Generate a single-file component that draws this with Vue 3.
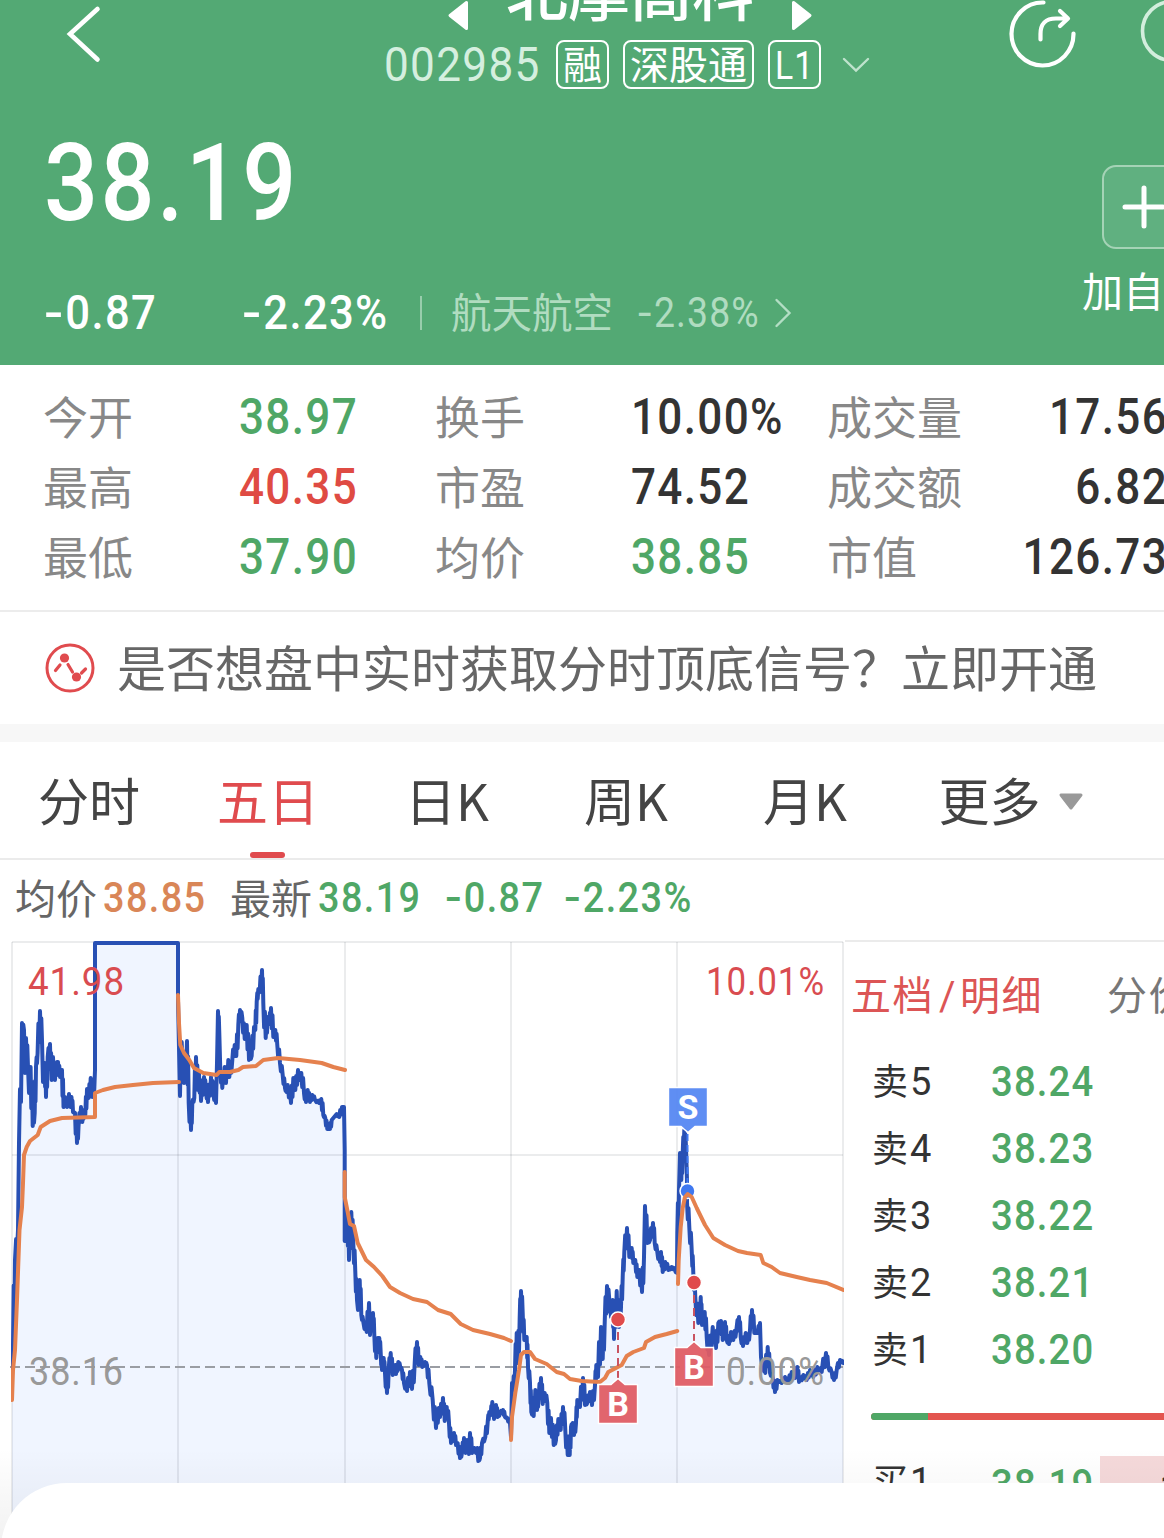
<script setup>
import { ref } from 'vue'

const quotes = [
  { label: '今开', value: '38.97', tone: 'down' },
  { label: '换手', value: '10.00%', tone: '' },
  { label: '成交量', value: '17.56', tone: '' },
  { label: '最高', value: '40.35', tone: 'up' },
  { label: '市盈', value: '74.52', tone: '' },
  { label: '成交额', value: '6.82', tone: '' },
  { label: '最低', value: '37.90', tone: 'down' },
  { label: '均价', value: '38.85', tone: 'down' },
  { label: '市值', value: '126.73', tone: '' },
]

const tabs = ['分时', '五日', '日K', '周K', '月K', '更多']
const activeTab = ref('五日')

const asks = [
  { level: '5', price: '38.24' },
  { level: '4', price: '38.23' },
  { level: '3', price: '38.22' },
  { level: '2', price: '38.21' },
  { level: '1', price: '38.20' },
]

// 五日分时价格，每天一段
const prices = [
  '12,1376 13,1345 15,1260 18,1230 19,1143 20,1089 21,1102 22,1023 24,1030 25,1073 26,1038 28,1067 29,1093 30.6,1067 32.7,1126 34.7,1113 36,1067 37.6,1053 40,1011 42,1040 43,1082 44.6,1063 46,1097 47.7,1057 50,1044 51.7,1080 53,1057 55,1080 57,1062 58,1062 60,1077 62,1070 63.5,1107 65,1097 67,1107 69,1094 70.5,1107 71.5,1097 73,1112 75,1113 77,1143 78.5,1127 81,1107 82.3,1122 84,1110 85.3,1115 87,1089 88.7,1098 90.7,1078 92.3,1097 94.3,1089 95,1070 95,943 178,943 178,1000',
  '180,1096 181.7,1042 184,1083 187,1041 188.7,1103 191,1130 192.3,1103 194.3,1098 196,1057 198,1090 199,1073 201,1101 204,1077 206,1090 208,1102 211,1077 213.3,1093 216,1103 217,1063 218,1011 219.3,1033 220.3,1070 222.3,1088 224.7,1067 226,1083 228.3,1060 229.3,1077 232.3,1060 234.7,1045 236.3,1056 238.3,1025 240,1010 242.3,1018 244.7,1039 246.7,1025 249,1060 251.7,1056 254,1027 255.3,1030 256.7,1002 258.3,989 259.7,992 262,970 263.3,1003 265.7,1038 267.7,1017 269.3,1024 271,1008 273.3,1037 275.3,1030 277.3,1045 280,1063 282.7,1075 285,1088 286.7,1092 287.7,1085 291,1103 293.3,1078 295.3,1090 298,1070 299.7,1080 301.3,1073 304,1093 306,1102 307.7,1090 310,1102 312.3,1095 315,1100 319,1103 321.3,1099 323.3,1115 325.3,1118 327.3,1129 330,1129 331.7,1120 336.7,1114 339.3,1117 342,1107 344,1107',
  '344.7,1150 344.7,1241 347.3,1213 349,1260 351.3,1212 353.3,1243 355.3,1272 357,1300 358,1310 359.7,1280 361.3,1315 363.3,1322 366.7,1332 369,1303 370,1335 373,1313 374.3,1335 376.3,1358 377.7,1338 379.3,1338 380.7,1353 382,1370 383.7,1358 385,1373 387,1393 388.7,1370 390.7,1353 392.7,1375 395.3,1365 396,1374 398.3,1362 400.3,1367 402,1370 404,1383 407,1391 410,1372 412,1389 414.7,1363 417,1342 418.7,1365 420.3,1357 422.3,1367 425,1362 427,1365 429.3,1383 432.7,1400 436,1428 438.7,1408 440,1417 443,1398 444.7,1421 446.7,1407 449,1423 451,1443 454,1433 456,1445 457.7,1443 460,1458 462,1453 464,1438 465.7,1453 467,1440 469,1454 470,1433 472,1453 474.3,1448 476,1453 477.3,1448 478.3,1461 480,1458 482,1443 485.3,1437 487.7,1422 489.3,1412 490.7,1415 492.3,1402 494,1419 496,1405 497.7,1417 500,1413 503,1410 505,1417 507.3,1418 510,1423',
  '511,1437 512,1383 513,1390 515,1370 516.7,1333 517.7,1363 519.7,1317 521,1291 522.7,1313 524.3,1340 526.7,1337 528,1367 530,1383 531.3,1412 533.7,1416 535.3,1390 537,1410 538.7,1397 541,1378 542.7,1404 544.7,1393 547.3,1403 549.3,1433 551,1418 553.7,1445 556,1440 558.3,1419 560.7,1430 563,1407 565.3,1430 567.7,1455 569.7,1455 571,1427 572.7,1423 574,1435 576,1423 577.3,1400 580,1407 583,1378 585,1405 587.3,1403 590,1392 592,1405 595,1385 596.3,1365 598,1377 601,1327 602.7,1359 604.7,1323 607,1286 609.3,1300 611,1317 612.7,1300 614,1339 616.7,1291 619,1327 621,1307 622.7,1277 624.3,1252 627,1228 629.3,1257 631.7,1248 633.3,1263 635.3,1260 637.3,1277 639.3,1270 642,1292 644,1257 645,1206 647.3,1243 650,1240 653,1223 654.7,1243 657.3,1252 660,1262 661,1252 662.7,1272 665.3,1262 668.3,1270 671.7,1267 675,1270 677,1273',
  '677.3,1233 679,1190 680,1153 681.3,1180 682.7,1153 684.3,1130 686,1147 687,1180 687,1202 689.3,1227 691.7,1250 693.3,1273 695.3,1297 698.3,1323 700.7,1297 702,1325 704.7,1312 706.7,1337 709,1355 712.7,1327 716,1348 718.3,1323 721,1321 722.7,1340 725,1322 726.7,1340 729,1344 731,1332 733.3,1340 736.7,1327 739,1317 740.7,1337 743,1346 745.7,1333 747.3,1343 750,1330 752,1310 754.3,1333 757.7,1333 760,1323 761,1357 763.3,1367 765.3,1373 767.7,1347 770,1373 772.7,1377 775,1392 777.3,1380 781.7,1383 785,1377 788.3,1383 791.7,1372 795,1378 797.3,1367 799,1382 803.3,1375 806.7,1380 810,1370 813.3,1377 817.3,1367 821.7,1372 826,1353 828.3,1367 831.7,1372 834,1380 836.7,1370 840,1360 843.3,1363',
]

// 相邻两点之间补一次回摆，还原逐笔波动
const wiggle = (segment) => {
  const pts = segment.split(' ').map((p) => p.split(',').map(Number))
  const out = [pts[0]]
  for (let i = 1; i < pts.length; i++) {
    const [x1, y1] = pts[i - 1]
    const [x2, y2] = pts[i]
    const dx = x2 - x1
    const dy = y2 - y1
    if (dx > 1.1 && dx < 5) {
      out.push([x1 + dx * 0.35, y1 + dy * 0.7], [x1 + dx * 0.65, y1 + dy * 0.25])
    }
    out.push([x2, y2])
  }
  return out.map(([x, y]) => `${x.toFixed(1)},${y.toFixed(1)}`).join(' ')
}

const priceLine = prices.map(wiggle).join(' ')

// 均价线
const avgLines = [
  '12,1400 13,1370 15,1350 17,1300 19.5,1230 22,1207 23,1183 24,1155 26.7,1147 30,1141 37.7,1135 40.7,1127 50,1121 62,1118 95,1117 95,1093 103,1090 115,1087 133,1085 153,1083 179,1082',
  '178,995 179,1023 180.3,1045 184,1053 189.3,1060 194,1068 203.3,1073 216.7,1075 219.3,1072 230,1072 238.3,1070 243,1067 256,1066 263.3,1060 278,1058 300,1060 321.7,1063 333.3,1067 345,1070',
  '344.7,1172 344.7,1197 347.3,1210 350,1224 354,1226 357.7,1243 366,1260 374,1267 382.3,1276 390,1287 400,1293 413,1299 427,1302 438,1310 450.7,1314 460.7,1324 473,1330 490,1334 504,1338 511,1341',
  '511,1440 512,1417 515.3,1393 519,1370 521,1355 524,1352 530,1352 535,1359 546.7,1364 556.7,1372 564,1374 570,1379 581.7,1381 600,1382 605,1378 608.3,1372 621.7,1365 626.7,1356 633.3,1352 644,1348 646,1342 655,1337 666.7,1334 677.3,1331',
  '678,1284 678.7,1260 680.7,1227 682.7,1208 685,1197 687.7,1194 691.7,1197 696.7,1208 705,1225 713.3,1238 725,1245 738,1251 747,1253 760.7,1255 763.3,1263 771.7,1267 780,1273 796.7,1277 810,1280 826.7,1283 843.3,1290',
]

const dayLines = [12, 178, 345, 511, 677, 843]
</script>

<template>
  <div class="page">
    <header class="header">
      <div class="nav">
        <svg class="back" width="40" height="70" viewBox="64 0 40 70">
          <path d="M97.5 9 L70 34 L97.5 59.5" fill="none" stroke="#fff" stroke-width="4.6" stroke-linecap="round" />
        </svg>
        <div class="stock">
          <div class="stock-name">
            <svg width="22" height="32" viewBox="0 0 22 32">
              <path d="M19.5 2.5 V28.5 L3 15.5 Z" fill="#fff" stroke="#fff" stroke-width="3" stroke-linejoin="round" />
            </svg>
            <span class="name">北摩高科</span>
            <svg width="22" height="32" viewBox="0 0 22 32">
              <path d="M2.5 2.5 V28.5 L19 15.5 Z" fill="#fff" stroke="#fff" stroke-width="3" stroke-linejoin="round" />
            </svg>
          </div>
          <div class="stock-code">
            <span class="code num">002985</span>
            <span class="tag">融</span>
            <span class="tag">深股通</span>
            <span class="tag tag-level"><span class="num">L1</span></span>
            <svg width="30" height="20" viewBox="0 0 30 20">
              <path d="M3 4 L15 15.5 L27 4" fill="none" stroke="#bfe3cd" stroke-width="2.4" stroke-linecap="round" />
            </svg>
          </div>
        </div>
        <svg class="actions" width="160" height="70" viewBox="1004 0 160 70">
          <g fill="none" stroke="#fff" stroke-width="4.2" stroke-linecap="round" stroke-linejoin="round">
            <path d="M1043.5 2.5 A31 31.5 0 1 0 1073.5 33.5" />
            <path d="M1040.5 39.5 V34 Q1040.5 18.5 1056 18.5 H1067 M1060 11 L1068 18.5 L1060 26" />
            <circle cx="1172" cy="31" r="29.5" stroke="#d3eedd" stroke-width="3.6" />
          </g>
        </svg>
      </div>

      <div class="summary">
        <div>
          <div class="price num">38.19</div>
          <div class="changes">
            <span class="chg num"><i>-</i>0.87</span>
            <span class="pct num"><i>-</i>2.23%</span>
            <div class="bar"></div>
            <span class="sector">航天航空</span>
            <span class="sector-pct num"><i>-</i>2.38%</span>
            <svg width="20" height="32" viewBox="0 0 20 32">
              <path d="M3.5 3 L16.5 16 L3.5 29" fill="none" stroke="#b3dec4" stroke-width="2.4" stroke-linecap="round" />
            </svg>
          </div>
        </div>
        <div class="add">
          <div class="add-box">
            <svg width="44" height="44" viewBox="0 0 44 44">
              <path d="M22 3 V41 M3 22 H41" stroke="#fff" stroke-width="5" stroke-linecap="round" />
            </svg>
          </div>
          <span>加自</span>
        </div>
      </div>
    </header>

    <section class="quotes">
      <div v-for="q in quotes" :key="q.label" class="quote">
        <span class="quote-label">{{ q.label }}</span>
        <span class="quote-value num" :class="q.tone">{{ q.value }}</span>
      </div>
    </section>

    <section class="promo">
      <svg width="52" height="52" viewBox="0 0 52 52">
        <circle cx="26" cy="26" r="23" fill="none" stroke="#e04b4e" stroke-width="3" />
        <path d="M11.5 28.500 L16 23 M24 22.500 L28.500 30 M37.500 31 L41.500 27" stroke="#e04b4e" stroke-width="3.2" stroke-linecap="round" />
        <circle cx="20.5" cy="16" r="4.6" fill="#e04b4e" />
        <circle cx="32.5" cy="35" r="4.6" fill="#e04b4e" />
      </svg>
      <span>是否想盘中实时获取分时顶底信号？立即开通</span>
    </section>

    <nav class="tabs">
      <button
        v-for="tab in tabs"
        :key="tab"
        class="tab"
        :class="{ active: tab === activeTab }"
        @click="activeTab = tab"
      >
        {{ tab }}
        <svg v-if="tab === '更多'" width="26" height="18" viewBox="0 0 26 18">
          <path d="M3 2 H23 L13 15 Z" fill="#999" stroke="#999" stroke-width="3" stroke-linejoin="round" />
        </svg>
      </button>
    </nav>

    <div class="legend">
      <span class="legend-label">均价</span>
      <span class="num avg">38.85</span>
      <span class="legend-label">最新</span>
      <span class="num down last">38.19</span>
      <span class="num down diff"><i>-</i>0.87</span>
      <span class="num down"><i>-</i>2.23%</span>
    </div>

    <main class="body">
      <svg class="chart" width="845" height="598" viewBox="0 940 845 598">
        <defs>
          <clipPath id="plot"><rect x="11" y="941" width="833" height="597" /></clipPath>
        </defs>
        <polygon :points="`12,1538 ${priceLine} 843,1538`" fill="#f0f5ff" />
        <g stroke="#141e32" stroke-opacity=".085" stroke-width="2">
          <line v-for="x in dayLines" :key="x" :x1="x" :x2="x" y1="942" y2="1538" />
          <path d="M12 942 H843 M12 1155 H843" />
        </g>
        <path d="M10 1367 H843" stroke="#9a9da3" stroke-width="2" stroke-dasharray="10 5" />
        <g clip-path="url(#plot)" fill="none" stroke-width="4" stroke-linecap="round" stroke-linejoin="round">
          <polyline :points="priceLine" stroke="#2850b4" />
          <!-- 卖点 -->
          <path d="M687.5 1134 V1184" stroke="#3f78f0" stroke-width="2" stroke-dasharray="7 4" stroke-linecap="butt" />
          <circle cx="687.5" cy="1191" r="7.5" fill="#3f78f0" stroke="#fff" stroke-width="1.5" />
          <polyline v-for="(line, i) in avgLines" :key="i" :points="line" stroke="#e5814e" />
        </g>
        <g stroke="#c95361" stroke-width="2" stroke-dasharray="8 5">
          <path d="M618 1332 V1378" />
          <path d="M694 1295 V1341" />
        </g>
        <g fill="#e04b4b" stroke="#fff" stroke-width="1.5">
          <circle cx="618" cy="1319.5" r="7.5" />
          <circle cx="694" cy="1282.5" r="7.5" />
        </g>
        <g stroke="#fff" stroke-width="1.4" fill-opacity=".94">
          <path d="M668.5 1087.5 H707.5 V1126.5 H695 L688 1132.5 L681 1126.5 H668.5 Z" fill="#5587f2" />
          <path d="M598.5 1384.5 H611 L618 1378.5 L625 1384.5 H637.5 V1423.5 H598.5 Z" fill="#df5b64" />
          <path d="M674.5 1347.5 H687 L694 1341.5 L701 1347.5 H713.5 V1386.5 H674.5 Z" fill="#df5b64" />
        </g>
        <g class="marks">
          <text x="688" y="1119">S</text>
          <text x="618" y="1416">B</text>
          <text x="694" y="1379">B</text>
        </g>
        <g class="axis">
          <text x="28" y="995" textLength="97" lengthAdjust="spacingAndGlyphs" fill="#d94c50">41.98</text>
          <text x="706" y="995" textLength="119" lengthAdjust="spacingAndGlyphs" fill="#d94c50">10.01%</text>
          <text x="29" y="1385" textLength="95" lengthAdjust="spacingAndGlyphs" fill="#999">38.16</text>
          <text x="726" y="1385" textLength="99" lengthAdjust="spacingAndGlyphs" fill="#999">0.00%</text>
        </g>
      </svg>

      <aside class="book">
        <div class="book-tabs">
          <span class="book-tab active">五档<i>/</i>明细</span>
          <span class="book-tab">分价</span>
        </div>
        <div v-for="a in asks" :key="a.level" class="level">
          <span class="level-label">卖<b>{{ a.level }}</b></span>
          <span class="num down">{{ a.price }}</span>
        </div>
        <div class="ratio"><div class="ratio-sell"></div></div>
        <div class="level">
          <span class="level-label">买<b>1</b></span>
          <span class="num down">38.19</span>
          <span class="volume">1</span>
        </div>
      </aside>
      <div class="shade"></div>
      <div class="sheet"></div>
    </main>
  </div>
</template>

<style>
body {
  margin: 0;
  overflow: hidden;
}
</style>

<style scoped>
.page {
  width: 1164px;
  height: 1538px;
  overflow: hidden;
  background: #fff;
  color: #333;
  font-family: "Noto Sans CJK SC", sans-serif;
}

svg {
  display: block;
  flex-shrink: 0;
}

/* 数字统一用窄体 */
.num {
  display: inline-block;
  flex-shrink: 0;
  font-family: Roboto, "Liberation Sans", sans-serif;
  font-weight: 500;
  letter-spacing: 0.03em;
  white-space: nowrap;
  transform: scaleX(0.89);
  transform-origin: left center;
}

/* 负号加宽 */
.num i {
  display: inline-block;
  margin-right: 0.12em;
  font-style: normal;
  transform: scaleX(1.3);
  transform-origin: left center;
}

.up {
  color: #df4b43;
}

.down {
  color: #4fa766;
}

.header {
  height: 365px;
  background: #53a974;
  color: #fff;
  overflow: hidden;
}

.nav {
  display: flex;
  height: 100px;
  padding-left: 64px;
}

.stock {
  width: 490px;
  margin: 0 130px 0 280px;
}

.stock-name {
  display: flex;
  justify-content: space-between;
  width: 366px;
  height: 32px;
  margin-left: 63px;
}

.name {
  margin-top: -42px;
  font-size: 62px;
  font-weight: 500;
  line-height: 62px;
}

.stock-code {
  display: flex;
  align-items: center;
  height: 49px;
  margin-top: 8px;
}

.code {
  width: 172px;
  color: #d5efdf;
  font-size: 49px;
  font-weight: 400;
  line-height: 49px;
  transform: scaleX(0.9);
}

.tag {
  box-sizing: border-box;
  height: 49px;
  margin-right: 14px;
  padding: 0 5px;
  border: 2px solid #fff;
  border-radius: 8px;
  font-size: 39px;
  line-height: 41px;
}

.tag-level {
  width: 53px;
  margin-right: 20px;
  padding-left: 5px;
}

.tag-level .num {
  font-size: 38px;
  font-weight: 400;
  line-height: 42px;
}

.summary {
  display: flex;
  justify-content: space-between;
}

.price {
  margin: 23px 0 0 44px;
  font-size: 107px;
  letter-spacing: 0.025em;
  line-height: 122px;
}

.changes {
  display: flex;
  align-items: center;
  height: 60px;
  margin: 38px 0 0 44px;
  font-size: 49px;
  line-height: 60px;
}

.chg {
  width: 198px;
}

.pct {
  width: 178px;
}

.bar {
  width: 2px;
  height: 34px;
  margin-right: 29px;
  background: #98cdac;
}

.sector {
  width: 187px;
  margin-top: -4px;
  color: #b0dcc0;
  font-size: 40.5px;
}

.sector-pct {
  width: 135px;
  color: #b0dcc0;
  font-size: 42px;
  font-weight: 400;
}

.add {
  width: 82px;
  margin-top: 65px;
  font-size: 41px;
  line-height: 60px;
  white-space: nowrap;
}

.add-box {
  box-sizing: border-box;
  width: 84px;
  height: 84px;
  margin: 0 0 10px 20px;
  padding: 18px;
  border: 2px solid #a5d3b6;
  border-radius: 14px;
  background: #60b080;
}

.quotes {
  display: grid;
  grid-template-columns: 392px 392px 336px;
  grid-auto-rows: 70px;
  height: 227px;
  padding: 17px 0 1px 44px;
  border-bottom: 2px solid #ececec;
}

.quote {
  display: flex;
  font-size: 49.5px;
  line-height: 70px;
}

.quote-label {
  width: 196px;
  margin: -1px 0 0 -1px;
  color: #888;
  font-size: 45px;
}

.quote:nth-child(3n) .quote-label {
  width: 150px;
}

.quote:nth-child(3n) .quote-value {
  flex: 1;
  margin-right: -4px;
  text-align: right;
  transform-origin: right center;
}

.promo {
  display: flex;
  align-items: center;
  gap: 21px;
  height: 112px;
  padding-left: 44px;
  border-bottom: 18px solid #f7f7f7;
  color: #666;
  font-size: 49px;
  line-height: 108px;
}

.promo span {
  margin-top: -4px;
  white-space: nowrap;
}

.tabs {
  display: grid;
  grid-template-columns: 178px 180px 178px 180px 178px 200px;
  height: 116px;
  border-bottom: 2px solid #ebebeb;
}

.tab {
  position: relative;
  display: flex;
  align-items: center;
  justify-content: center;
  gap: 17px;
  padding: 0 0 3px;
  border: 0;
  background: none;
  color: #444;
  font: 51px "Noto Sans CJK SC", sans-serif;
  line-height: 112px;
}

.tab:last-child {
  padding-left: 34px;
}

.tab svg {
  margin-top: 6px;
}

.tab.active {
  color: #e04b4e;
}

.tab.active::after {
  content: "";
  position: absolute;
  bottom: 0;
  left: 72px;
  width: 35px;
  height: 6px;
  border-radius: 3px;
  background: #e04b4e;
}

.legend {
  display: flex;
  height: 80px;
  padding-left: 16px;
  font-size: 42.5px;
  line-height: 76px;
}

.legend-label {
  width: 88px;
  margin: -2px 0 0 -1px;
  color: #666;
  font-size: 41px;
}

.avg {
  width: 128px;
  color: #d98657;
}

.last {
  width: 127px;
}

.diff {
  width: 119px;
}

.legend .num {
  letter-spacing: 0.037em;
}

.body {
  position: relative;
  display: flex;
  height: 598px;
  overflow: hidden;
}

.marks text {
  fill: #fff;
  font: 700 34px Roboto, sans-serif;
  text-anchor: middle;
}

.axis text {
  font: 39px Roboto, sans-serif;
  letter-spacing: 1px;
}

.book {
  width: 319px;
  overflow: hidden;
  border-top: 2px solid #ebebeb;
}

.book-tabs {
  display: flex;
  width: 400px;
  height: 106px;
  padding-left: 6px;
  color: #777;
  font-size: 40px;
  letter-spacing: 1.5px;
  line-height: 102px;
  white-space: nowrap;
}

.book-tab {
  flex-shrink: 0;
  width: 256px;
}

.book-tab.active {
  color: #dc5555;
}

.book-tab i {
  margin: 0 3px 0 5px;
  font-family: Roboto, sans-serif;
  font-style: normal;
}

.level {
  display: flex;
  height: 67px;
  padding-left: 27px;
  font-size: 43px;
  line-height: 67px;
}

.level .num {
  width: 108px;
  margin-left: 1px;
}

.level-label {
  flex-shrink: 0;
  width: 118px;
  margin-top: -2px;
  font-size: 36px;
}

.level-label b {
  margin-left: 2px;
  font: 38px Roboto, sans-serif;
}

.ratio {
  height: 7px;
  margin: 30px 0 31px 26px;
  border-radius: 4px 0 0 4px;
  background: #e3554f;
  overflow: hidden;
}

.ratio-sell {
  width: 57px;
  height: 100%;
  background: #4fa766;
}

.ratio + .level .level-label {
  margin-top: -5px;
}

.volume {
  flex: 1;
  height: 67px;
  margin: 5px 0 0 1px;
  padding-left: 59px;
  background: #f5d9da;
  font-family: Roboto, sans-serif;
}

.shade {
  position: absolute;
  inset: auto 0 0;
  height: 90px;
  background: linear-gradient(rgba(0, 0, 0, 0), rgba(0, 0, 0, 0.05));
}

.sheet {
  position: absolute;
  top: 543px;
  left: 1px;
  width: 1200px;
  height: 200px;
  border-radius: 66px 0 0;
  background: #fff;
}
</style>
